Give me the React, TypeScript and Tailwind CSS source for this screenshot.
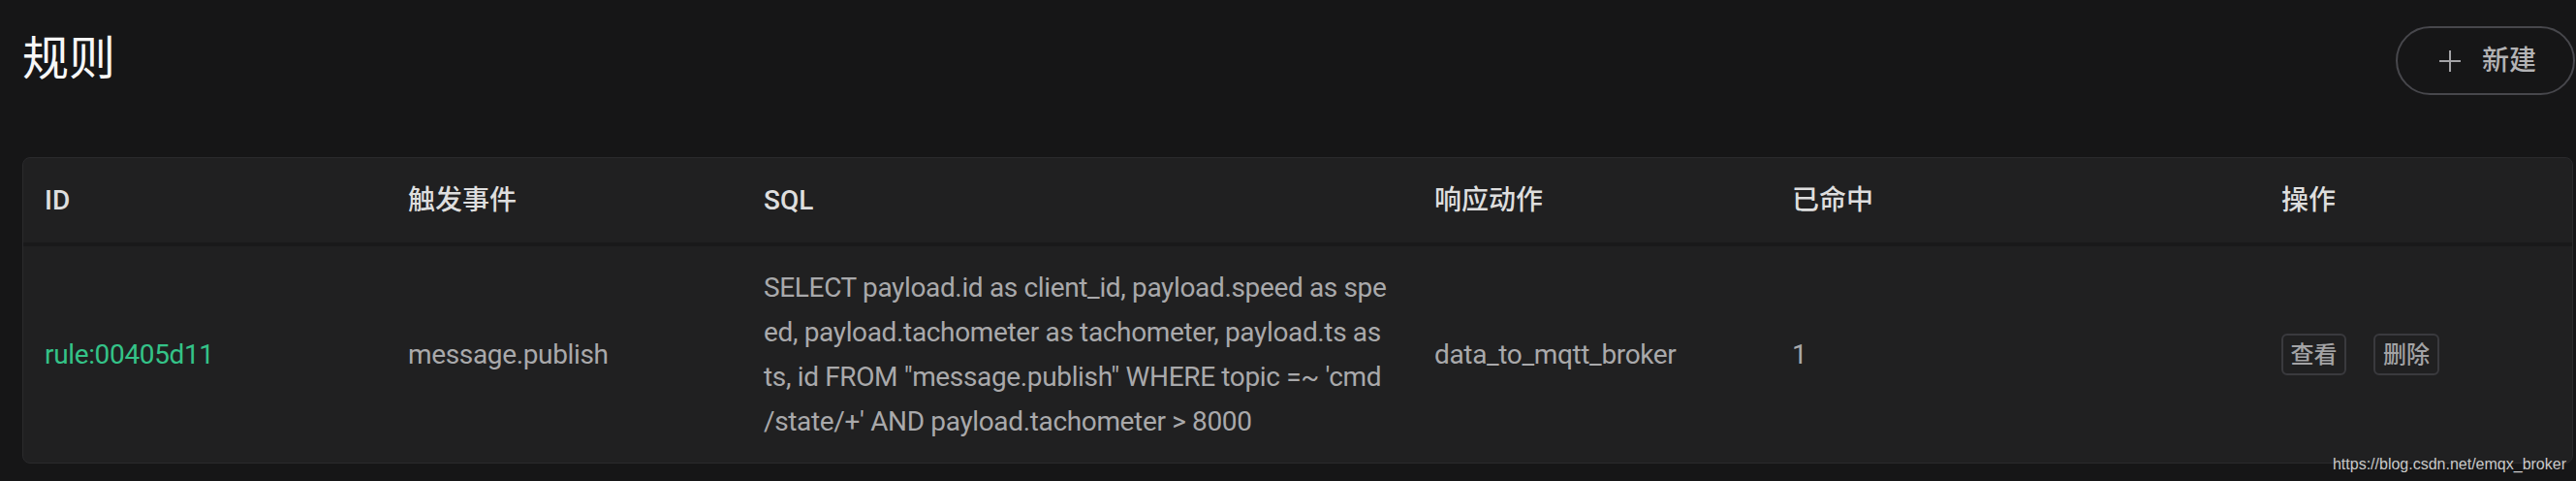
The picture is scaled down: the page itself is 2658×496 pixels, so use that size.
import React from "react";

const font = { fontFamily: '"Roboto", "Noto Sans CJK SC", sans-serif' };

function PlusIcon() {
  return (
    <svg width="22" height="22" viewBox="0 0 22 22" fill="none">
      <line x1="11" y1="0" x2="11" y2="22" stroke="#a3a3a6" strokeWidth="2" />
      <line x1="0" y1="11" x2="22" y2="11" stroke="#a3a3a6" strokeWidth="2" />
    </svg>
  );
}

const sqlLines = [
  "SELECT payload.id as client_id, payload.speed as spe",
  "ed, payload.tachometer as tachometer, payload.ts as",
  "ts, id FROM \"message.publish\" WHERE topic =~ 'cmd",
  "/state/+' AND payload.tachometer > 8000",
];

export default function App() {
  const headers = ["ID", "触发事件", "SQL", "响应动作", "已命中", "操作"];
  const cols = "grid grid-cols-[375px_367px_692px_369px_505px_1fr]";
  return (
    <div
      className="relative h-[496px] w-[2658px] overflow-hidden bg-[#161617] pl-[23px] pr-[3px]"
      style={font}
    >
      <div className="flex h-[125px] items-center justify-between">
        <h1 className="-mt-[4px] text-[48px] font-normal leading-none text-[#f7f7f7]">规则</h1>
        <button className="-mr-[2px] flex h-[71px] w-[185px] items-center gap-[22px] rounded-full border-2 border-[#47474c] pl-[43px] text-[28px] font-medium leading-none text-[#b3b3b5]">
          <PlusIcon />
          <span>新建</span>
        </button>
      </div>
      <div className="mt-[37px] overflow-hidden rounded-[8px] border border-[#2a2a2c] bg-[#202021]">
        <div className={`${cols} h-[91px] items-center border-b-4 border-[#19191a]`}>
          {headers.map((h) => (
            <div key={h} className="pl-[22px] text-[28px] font-medium leading-none text-[#dedede]">
              {h}
            </div>
          ))}
        </div>
        <div className={`${cols} h-[223px] items-center text-[28px] tracking-[-0.35px] text-[#a9a9ab]`}>
          <div className="pl-[22px] leading-none text-[#34c388]">rule:00405d11</div>
          <div className="pl-[22px] leading-none">message.publish</div>
          <div className="px-[22px] leading-[46px] whitespace-nowrap">
            {sqlLines.map((l) => (
              <div key={l}>{l}</div>
            ))}
          </div>
          <div className="pl-[22px] leading-none">data_to_mqtt_broker</div>
          <div className="pl-[22px] leading-none">1</div>
          <div className="flex gap-[28px] pl-[22px] tracking-normal">
            <button className="flex h-[43px] w-[67px] items-center justify-center rounded-[6px] border-2 border-[#3a3a3e] text-[24px] font-medium leading-none text-[#a3a3a5]">
              查看
            </button>
            <button className="flex h-[43px] w-[68px] items-center justify-center rounded-[6px] border-2 border-[#3a3a3e] text-[24px] font-medium leading-none text-[#a3a3a5]">
              删除
            </button>
          </div>
        </div>
      </div>
      <div
        className="absolute bottom-[9px] right-[10px] text-[16px] leading-none text-[#c9c9c9]"
        style={{ fontFamily: '"Liberation Sans", Arial, sans-serif' }}
      >
        https://blog.csdn.net/emqx_broker
      </div>
    </div>
  );
}
